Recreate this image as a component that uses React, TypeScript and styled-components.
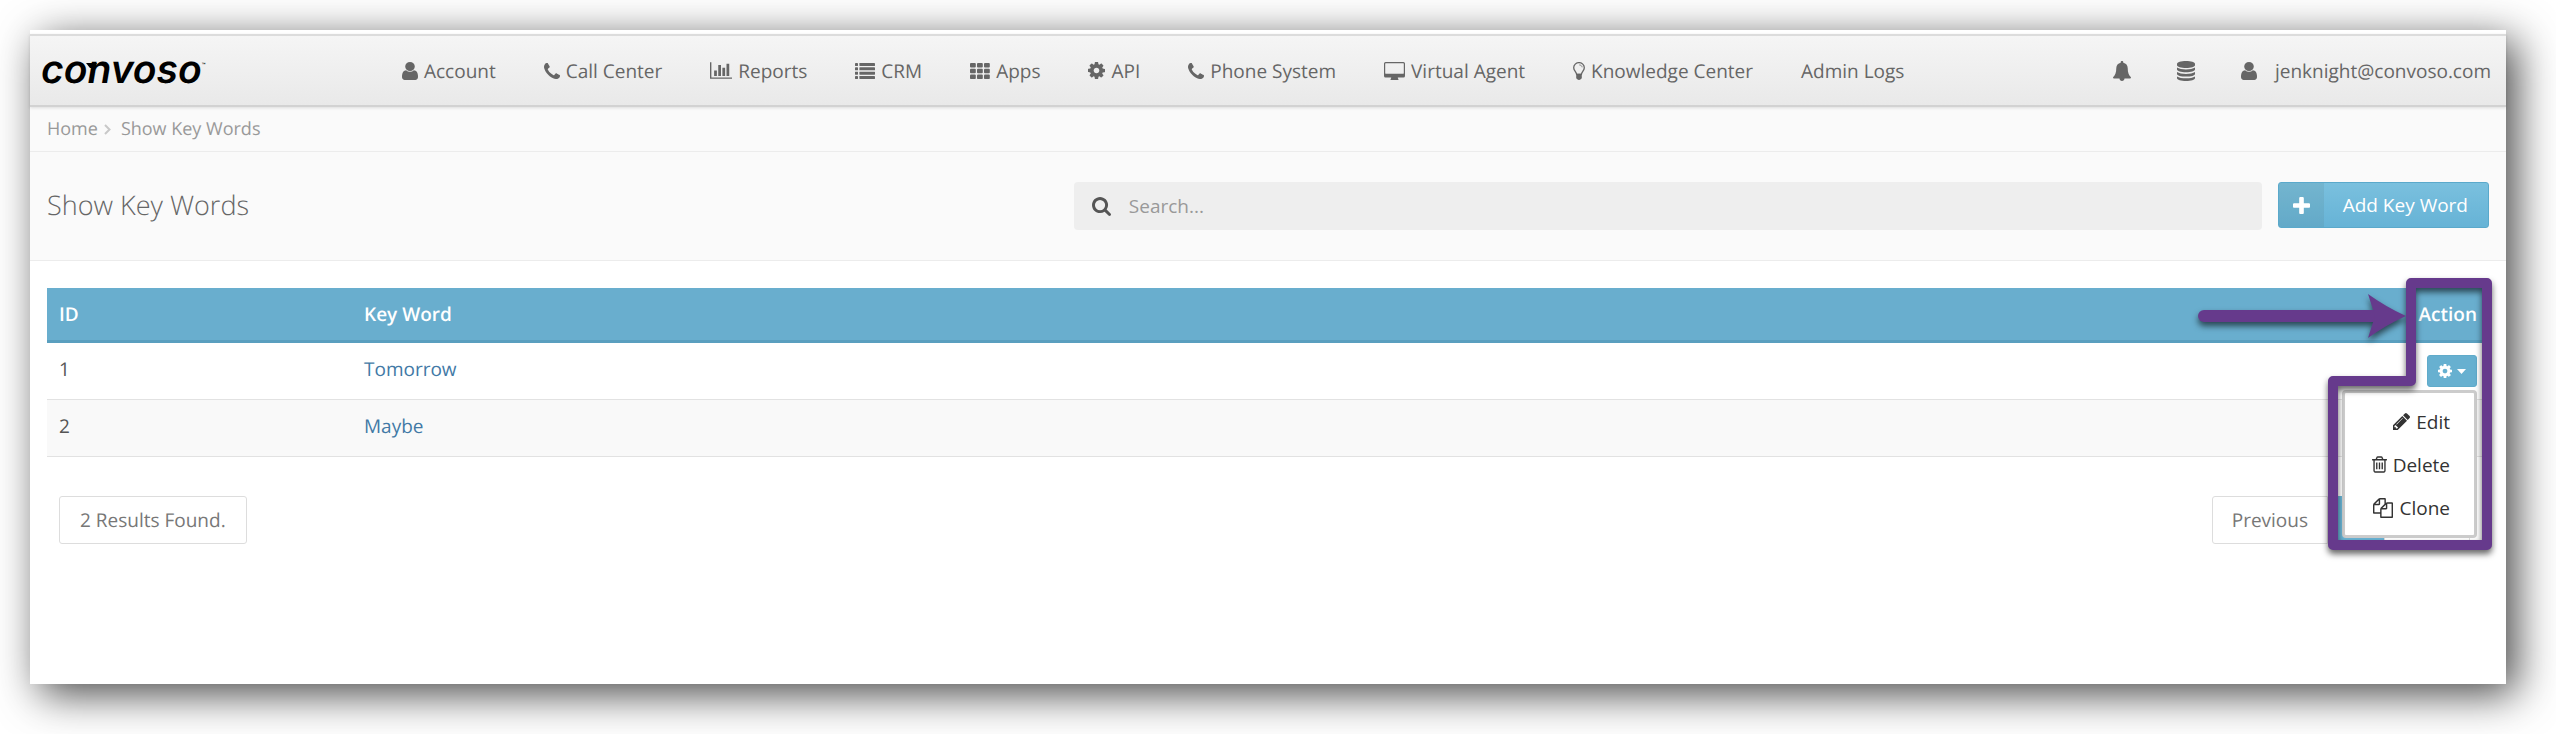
import React from 'react';
import styled, { createGlobalStyle } from 'styled-components';

const PURPLE = '#663a8c';

const GlobalStyle = createGlobalStyle`
  *, *::before, *::after { box-sizing: border-box; }
  body {
    margin: 0;
    background: #fff;
    color: #555;
    font-family: 'Open Sans', 'Noto Sans', sans-serif;
    font-size: 19px;
    line-height: 28px;
    text-rendering: geometricPrecision;
  }
  a { color: inherit; text-decoration: none; }
  button, input { font: inherit; }
`;

/* ---------- icons ---------- */

const Svg = styled.svg`
  display: block;
  flex: none;
  fill: currentColor;
`;

type IconProps = { w: number; h: number };

const UserIcon = ({ w, h }: IconProps) => (
  <Svg width={w} height={h} viewBox="256 128 1280 1536" preserveAspectRatio="none" aria-hidden="true">
    <path d="M1536 1399q0 109-62.5 187t-150.5 78h-854q-88 0-150.5-78t-62.5-187q0-85 8.5-160.5t31.5-152 58.5-131 94-89 134.5-34.5q131 128 313 128t313-128q76 0 134.5 34.5t94 89 58.5 131 31.5 152 8.5 160.5zm-256-887q0 159-112.5 271.5t-271.5 112.5-271.5-112.5-112.5-271.5 112.5-271.5 271.5-112.5 271.5 112.5 112.5 271.5z" />
  </Svg>
);

const PhoneIcon = ({ w, h }: IconProps) => (
  <Svg width={w} height={h} viewBox="192 128 1408 1408" aria-hidden="true">
    <path d="M1600 1240q0 27-10 70.5t-21 68.5q-21 50-122 106-94 51-186 51-27 0-53-3.5t-57.5-12.5-47-14.5-55.5-20.5-49-18q-98-35-175-83-127-79-264-216t-216-264q-48-77-83-175-3-9-18-49t-20.5-55.5-14.5-47-12.5-57.5-3.5-53q0-92 51-186 56-101 106-122 25-11 68.5-21t70.5-10q14 0 21 3 18 6 53 76 11 19 30 54t35 63.5 31 53.5q3 4 17.5 25t21.5 35.5 7 28.5q0 20-28.5 50t-62 55-62 53-28.5 46q0 9 5 22.5t8.5 20.5 14 24 11.5 19q76 137 174 235t235 174q2 1 19 11.5t24 14 20.5 8.5 22.5 5q18 0 46-28.5t53-62 55-62 50-28.5q14 0 28.5 7t35.5 21.5 25 17.5q25 15 53.5 31t63.5 35 54 30q70 35 76 53 3 7 3 21z" />
  </Svg>
);

const ChartIcon = ({ w, h }: IconProps) => (
  <Svg width={w} height={h} viewBox="0 128 2048 1536" aria-hidden="true">
    <path d="M640 896v512h-256v-512h256zm384-512v1024h-256v-1024h256zm1024 1152v128h-2048v-1536h128v1408h1920zm-640-896v768h-256v-768h256zm384-384v1152h-256v-1152h256z" />
  </Svg>
);

const ListIcon = ({ w, h }: IconProps) => (
  <Svg width={w} height={h} viewBox="0 0 20 16" aria-hidden="true">
    {[0, 4.33, 8.66, 13].map((y) => (
      <g key={y}>
        <rect x="0" y={y} width="3" height="3" rx="0.4" />
        <rect x="4.4" y={y} width="15.6" height="3" rx="0.4" />
      </g>
    ))}
  </Svg>
);

const GridIcon = ({ w, h }: IconProps) => (
  <Svg width={w} height={h} viewBox="0 0 20 16" aria-hidden="true">
    {[0, 5.8, 11.6].map((y) =>
      [0, 7, 14].map((x) => <rect key={`${x}-${y}`} x={x} y={y} width="5.8" height="4.5" rx="1" />),
    )}
  </Svg>
);

const CogIcon = ({ w, h }: IconProps) => (
  <Svg width={w} height={h} viewBox="128 128 1536 1536" aria-hidden="true">
    <path d="M1152 896q0-106-75-181t-181-75-181 75-75 181 75 181 181 75 181-75 75-181zm512-109v222q0 12-8 23t-20 13l-185 28q-19 54-39 91 35 50 107 138 10 12 10 25t-9 23q-27 37-99 108t-94 71q-12 0-26-9l-138-108q-44 23-91 38-16 136-29 186-7 28-36 28h-222q-14 0-24.5-8.5t-11.5-21.5l-28-184q-49-16-90-37l-141 107q-10 9-25 9-14 0-25-11-126-114-165-168-7-10-7-23 0-12 8-23 15-21 51-66.5t54-70.5q-27-50-41-99l-183-27q-13-2-21-12.5t-8-23.5v-222q0-12 8-23t19-13l186-28q14-46 39-92-40-57-107-138-10-12-10-24 0-10 9-23 26-36 98.5-107.5t94.5-71.5q13 0 26 10l138 107q44-23 91-38 16-136 29-186 7-28 36-28h222q14 0 24.5 8.5t11.5 21.5l28 184q49 16 90 37l142-107q9-9 24-9 13 0 25 10 129 119 165 170 7 8 7 22 0 12-8 23-15 21-51 66.5t-54 70.5q26 50 41 98l183 28q13 2 21 12.5t8 23.5z" />
  </Svg>
);

const DesktopIcon = ({ w, h }: IconProps) => (
  <Svg width={w} height={h} viewBox="0 0 21 18" aria-hidden="true">
    <path
      fillRule="evenodd"
      d="M1.6 0h17.8A1.6 1.6 0 0 1 21 1.6v12.3a1.6 1.6 0 0 1-1.6 1.6h-5.6c0 1 .7 1.4.7 1.9 0 .4-.3.6-.7.6H7.2c-.4 0-.7-.2-.7-.6 0-.5.7-.9.7-1.9H1.6A1.6 1.6 0 0 1 0 13.9V1.6A1.6 1.6 0 0 1 1.6 0zM1.7 1.2c-.3 0-.5.2-.5.5v9.5c0 .3.2.5.5.5h17.6c.3 0 .5-.2.5-.5V1.7c0-.3-.2-.5-.5-.5z"
    />
  </Svg>
);

const BulbIcon = ({ w, h }: IconProps) => (
  <Svg width={w} height={h} viewBox="0 0 12 18" aria-hidden="true">
    <path
      d="M3.6 12.4c-.3-2.6-2.9-3.7-2.9-6.7a5.3 5.1 0 0 1 10.6 0c0 3-2.6 4.1-2.9 6.7z"
      fill="none"
      stroke="currentColor"
      strokeWidth="1.3"
    />
    <path d="M6.3 2.9c1.6.1 2.7 1 2.8 2.4" fill="none" stroke="currentColor" strokeWidth=".8" />
    <path d="M3.2 11.8h5.6v4.2c0 .7-1 .9-1.3 1.5-.3.6-2.7.6-3 0-.3-.6-1.3-.8-1.3-1.5z" />
  </Svg>
);

const BellIcon = ({ w, h }: IconProps) => (
  <Svg width={w} height={h} viewBox="0 0 18 20" aria-hidden="true">
    <path d="M9 0c.8 0 1.3.5 1.3 1.2v.5c2.7.5 4.4 2.6 4.4 5.3 0 4.8 1.2 7.4 3.3 9.2 0 .8-.6 1.3-1.3 1.3h-5.2c0 1.5-1.1 2.5-2.5 2.5s-2.5-1-2.5-2.5H1.3C.6 17.5 0 17 0 16.2c2.1-1.8 3.3-4.4 3.3-9.2 0-2.7 1.7-4.8 4.4-5.3v-.5C7.7.5 8.2 0 9 0z" />
  </Svg>
);

const DatabaseIcon = ({ w, h }: IconProps) => (
  <Svg width={w} height={h} viewBox="0 0 18 20" aria-hidden="true">
    <path d="M9 0c5 0 9 1.2 9 2.7v1.5C18 5.7 14 6.9 9 6.9S0 5.7 0 4.2V2.7C0 1.2 4 0 9 0z" />
    {[0, 4.4, 8.8].map((dy) => (
      <path
        key={dy}
        transform={`translate(0 ${dy})`}
        d="M0 6.6c1.9 1.3 5.3 1.9 9 1.9s7.1-.6 9-1.9v1.9c0 1.5-4 2.7-9 2.7S0 10 0 8.5z"
      />
    ))}
  </Svg>
);

const SearchIcon = ({ w, h }: IconProps) => (
  <Svg width={w} height={h} viewBox="64 128 1664 1664" aria-hidden="true">
    <path d="M1216 832q0-185-131.5-316.5t-316.5-131.5-316.5 131.5-131.5 316.5 131.5 316.5 316.5 131.5 316.5-131.5 131.5-316.5zm512 832q0 52-38 90t-90 38q-54 0-90-38l-343-342q-179 124-399 124-143 0-273.5-55.5t-225-150-150-225-55.5-273.5 55.5-273.5 150-225 225-150 273.5-55.5 273.5 55.5 225 150 150 225 55.5 273.5q0 220-124 399l343 343q37 37 37 90z" />
  </Svg>
);

const PlusIcon = ({ w, h }: IconProps) => (
  <Svg width={w} height={h} viewBox="192 128 1408 1408" aria-hidden="true">
    <path d="M1600 736v192q0 40-28 68t-68 28h-416v416q0 40-28 68t-68 28h-192q-40 0-68-28t-28-68v-416h-416q-40 0-68-28t-28-68v-192q0-40 28-68t68-28h416v-416q0-40 28-68t68-28h192q40 0 68 28t28 68v416h416q40 0 68 28t28 68z" />
  </Svg>
);

const PencilIcon = ({ w, h }: IconProps) => (
  <Svg width={w} height={h} viewBox="128 149 1515 1515" aria-hidden="true">
    <path d="M491 1536l91-91-235-235-91 91v107h128v128h107zm523-928q0-22-22-22-10 0-17 7l-542 542q-7 7-7 17 0 22 22 22 10 0 17-7l542-542q7-7 7-17zm-54-192l416 416-832 832h-416v-416zm683 96q0 53-37 90l-166 166-416-416 166-165q36-38 90-38 53 0 91 38l235 234q37 39 37 91z" />
  </Svg>
);

const TrashIcon = ({ w, h }: IconProps) => (
  <Svg width={w} height={h} viewBox="192 128 1408 1536" aria-hidden="true">
    <path d="M704 736v576q0 14-9 23t-23 9h-64q-14 0-23-9t-9-23v-576q0-14 9-23t23-9h64q14 0 23 9t9 23zm256 0v576q0 14-9 23t-23 9h-64q-14 0-23-9t-9-23v-576q0-14 9-23t23-9h64q14 0 23 9t9 23zm256 0v576q0 14-9 23t-23 9h-64q-14 0-23-9t-9-23v-576q0-14 9-23t23-9h64q14 0 23 9t9 23zm128 724v-948h-896v948q0 22 7 40.5t14.5 27 10.5 8.5h832q3 0 10.5-8.5t14.5-27 7-40.5zm-672-1076h448l-48-117q-7-9-17-11h-317q-10 2-17 11zm928 32v64q0 14-9 23t-23 9h-96v948q0 83-47 143.5t-113 60.5h-832q-66 0-113-58.5t-47-141.5v-952h-96q-14 0-23-9t-9-23v-64q0-14 9-23t23-9h309l70-167q15-37 54-63t79-26h320q40 0 79 26t54 63l70 167h309q14 0 23 9t9 23z" />
  </Svg>
);

const CopyIcon = ({ w, h }: IconProps) => (
  <Svg width={w} height={h} viewBox="0 0 1792 1792" aria-hidden="true">
    <path d="M1696 384q40 0 68 28t28 68v1216q0 40-28 68t-68 28h-960q-40 0-68-28t-28-68v-288h-544q-40 0-68-28t-28-68v-672q0-40 20-88t48-76l408-408q28-28 76-48t88-20h416q40 0 68 28t28 68v328q68-40 128-40h416zm-544 213l-299 299h299v-299zm-640-384l-299 299h299v-299zm196 647l316-316v-416h-384v416q0 40-28 68t-68 28h-416v640h512v-256q0-40 20-88t48-76zm956 804v-1152h-384v416q0 40-28 68t-68 28h-416v640h896z" />
  </Svg>
);

const ChevronIcon = () => (
  <Svg width={7} height={11} viewBox="0 0 7 11" aria-hidden="true">
    <path d="M1 1l4.5 4.5L1 10" fill="none" stroke="currentColor" strokeWidth="2" />
  </Svg>
);

const CaretIcon = () => (
  <Svg width={9} height={5} viewBox="0 0 9 5" aria-hidden="true">
    <path d="M0 0h9L4.5 5z" />
  </Svg>
);

/* ---------- frame and top bar ---------- */

const Window = styled.div`
  position: relative;
  margin: 30px 50px 50px 30px;
  min-height: calc(100vh - 80px);
  padding-top: 4px;
  background: #fff;
  box-shadow: 10px 10px 40px rgba(0, 0, 0, 0.72);
`;

const TopBar = styled.header`
  position: relative;
  display: flex;
  align-items: center;
  height: 73px;
  padding: 0 15px 0 11px;
  border-top: 2px solid #dcdcdc;
  border-bottom: 2px solid #d2d2d2;
  background: linear-gradient(#f5f5f5, #e9e9e9);
  box-shadow: 0 1px 3px rgba(0, 0, 0, 0.12);
  color: #666;
  white-space: nowrap;
`;

const Logo = styled.a`
  position: relative;
  display: flex;
  align-items: flex-start;
  flex: none;
  width: 337px;
  padding-bottom: 2px;
  color: #000;
  font-family: Inter, 'Open Sans', sans-serif;
  font-size: 39px;
  font-style: italic;
  font-weight: 600;
  line-height: 48px;
`;

const LogoMark = styled.svg`
  position: absolute;
  left: 45px;
  top: 17px;
`;

const Trademark = styled.sup`
  margin-top: 17px;
  font-size: 6px;
  font-style: normal;
  line-height: 6px;
`;

const Nav = styled.nav`
  display: flex;
`;

const NavLink = styled.a`
  display: flex;
  align-items: center;
  gap: 6px;
  padding: 0 24px;
`;

const UserTools = styled.div`
  display: flex;
  align-items: center;
  gap: 46px;
  margin-left: auto;
`;

const IconButton = styled.button`
  display: flex;
  padding: 0;
  border: 0;
  background: none;
  color: inherit;
`;

const UserLink = styled.a`
  display: flex;
  align-items: center;
  gap: 18px;
`;

/* ---------- page header ---------- */

const Breadcrumb = styled.nav`
  display: flex;
  align-items: center;
  height: 45px;
  padding: 0 17px;
  border-bottom: 1px solid #ececec;
  background: #fafafa;
  color: #999;
  font-size: 18px;

  svg {
    margin: 0 10px 0 6px;
    color: #c8c8c8;
  }
`;

const PageHeader = styled.div`
  display: flex;
  align-items: flex-start;
  height: 109px;
  padding: 30px 17px 0;
  border-bottom: 1px solid #ececec;
  background: #fafafa;
`;

const Title = styled.h1`
  flex: 1027;
  margin: 0;
  color: #666;
  font-size: 27px;
  font-weight: 300;
  line-height: 46px;
`;

const SearchField = styled.label`
  display: flex;
  align-items: center;
  flex: 1152;
  gap: 18px;
  height: 48px;
  margin-right: 16px;
  padding: 0 18px;
  border-radius: 4px;
  background: #eee;
  color: #555;
`;

const SearchInput = styled.input`
  flex: 1;
  min-width: 0;
  padding: 0;
  border: 0;
  outline: 0;
  background: none;
  color: #555;

  &::placeholder {
    color: #999;
    opacity: 1;
  }
`;

const AddButton = styled.button`
  display: flex;
  align-items: stretch;
  flex: none;
  height: 46px;
  padding: 0;
  overflow: hidden;
  border: 1px solid #5aa9cb;
  border-radius: 3px;
  background: linear-gradient(#7ac0de, #66b3d6);
  color: #fff;
`;

const AddIcon = styled.span`
  display: flex;
  align-items: center;
  justify-content: center;
  width: 45px;
  background: rgba(80, 110, 110, 0.13);
`;

const AddText = styled.span`
  padding: 0 20px 0 19px;
  line-height: 44px;
`;

/* ---------- table ---------- */

const Content = styled.main`
  padding: 27px 17px 0;
`;

const Table = styled.table`
  width: 100%;
  border-collapse: separate;
  border-spacing: 0;
  text-align: left;
`;

const HeadCell = styled.th<{ $width?: string; $end?: boolean }>`
  width: ${(p) => p.$width ?? 'auto'};
  padding: 12px;
  border-bottom: 3px solid #5a9fbf;
  background: #69aece;
  color: #fff;
  font-weight: 600;
  text-align: ${(p) => (p.$end ? 'right' : 'left')};
`;

const Row = styled.tr`
  &:nth-child(even) {
    background: #f9f9f9;
  }
`;

const Cell = styled.td`
  padding: 12px;
  border-bottom: 1px solid #e2e2e2;
  vertical-align: top;
`;

const WordLink = styled.a`
  color: #4279a6;
`;

const ActionBox = styled.div`
  position: relative;
  display: flex;
  justify-content: flex-end;
`;

const GearButton = styled.button`
  display: flex;
  align-items: center;
  justify-content: center;
  gap: 5px;
  width: 50px;
  height: 32px;
  padding: 0;
  border: 1px solid #60abca;
  border-radius: 3px;
  background: #67b0d0;
  color: #fff;
`;

const Menu = styled.ul`
  position: absolute;
  z-index: 2;
  top: 35px;
  right: 0;
  width: 135px;
  margin: 0;
  padding: 7px 0 6px;
  border: 3px solid #ccc;
  border-radius: 4px;
  background: #fff;
  color: #333;
  list-style: none;
`;

const MenuItem = styled.button`
  display: flex;
  align-items: center;
  justify-content: flex-end;
  gap: 6px;
  width: 100%;
  height: 43px;
  padding: 0 24px;
  border: 0;
  background: none;
  color: inherit;
`;

const TableFooter = styled.div`
  display: flex;
  justify-content: space-between;
  padding: 39px 19px 0 12px;
  color: #777;
`;

const ResultCount = styled.span`
  padding: 9px 20px;
  border: 1px solid #ddd;
  border-radius: 3px;
`;

const Pager = styled.nav`
  display: flex;
`;

const PageLink = styled.a<{ $current?: boolean }>`
  min-width: 56px;
  min-height: 48px;
  padding: 9px 19px;
  border: 1px solid ${(p) => (p.$current ? '#69b4d5' : '#ddd')};
  background: ${(p) => (p.$current ? '#69b4d5' : '#fff')};
  color: ${(p) => (p.$current ? '#fff' : '#777')};

  &:first-child { border-radius: 3px 0 0 3px; }
  &:last-child { min-width: 86px; border-radius: 0 3px 3px 0; }
`;

/* ---------- callout ---------- */

const Callout = styled.svg`
  position: absolute;
  z-index: 3;
  top: 238px;
  right: 4px;
  overflow: visible;
  pointer-events: none;
  filter: drop-shadow(0 4px 3px rgba(0, 0, 0, 0.6));
`;

const navItems = [
  { label: 'Account', icon: <UserIcon w={16} h={18} /> },
  { label: 'Call Center', icon: <PhoneIcon w={16} h={16} /> },
  { label: 'Reports', icon: <ChartIcon w={22} h={17} /> },
  { label: 'CRM', icon: <ListIcon w={20} h={16} /> },
  { label: 'Apps', icon: <GridIcon w={20} h={16} /> },
  { label: 'API', icon: <CogIcon w={17} h={17} /> },
  { label: 'Phone System', icon: <PhoneIcon w={16} h={16} /> },
  { label: 'Virtual Agent', icon: <DesktopIcon w={21} h={18} /> },
  { label: 'Knowledge Center', icon: <BulbIcon w={12} h={18} /> },
  { label: 'Admin Logs', icon: null },
];

const rows = [
  { id: 1, word: 'Tomorrow', open: true },
  { id: 2, word: 'Maybe', open: false },
];

const menuItems = [
  { label: 'Edit', icon: <PencilIcon w={17} h={17} /> },
  { label: 'Delete', icon: <TrashIcon w={15} h={17} /> },
  { label: 'Clone', icon: <CopyIcon w={20} h={20} /> },
];

export default function App() {
  return (
    <>
      <GlobalStyle />
      <Window>
        <TopBar>
          <Logo href="#">
            convoso
            <Trademark>™</Trademark>
            <LogoMark width="12" height="7" viewBox="0 0 12 7" aria-hidden="true">
              <path d="M0 0h11L9 5H4z" />
            </LogoMark>
          </Logo>
          <Nav aria-label="Main">
            {navItems.map((item) => (
              <NavLink key={item.label} href="#">
                {item.icon}
                {item.label}
              </NavLink>
            ))}
          </Nav>
          <UserTools>
            <IconButton type="button" aria-label="Notifications">
              <BellIcon w={18} h={20} />
            </IconButton>
            <IconButton type="button" aria-label="Data">
              <DatabaseIcon w={18} h={20} />
            </IconButton>
            <UserLink href="#">
              <UserIcon w={16} h={18} />
              jenknight@convoso.com
            </UserLink>
          </UserTools>
        </TopBar>

        <Breadcrumb aria-label="Breadcrumb">
          <a href="#">Home</a>
          <ChevronIcon />
          <a href="#">Show Key Words</a>
        </Breadcrumb>

        <PageHeader>
          <Title>Show Key Words</Title>
          <SearchField>
            <SearchIcon w={19} h={19} />
            <SearchInput type="text" placeholder="Search..." aria-label="Search" />
          </SearchField>
          <AddButton type="button">
            <AddIcon>
              <PlusIcon w={17} h={17} />
            </AddIcon>
            <AddText>Add Key Word</AddText>
          </AddButton>
        </PageHeader>

        <Content>
          <Table>
            <thead>
              <tr>
                <HeadCell $width="305px">ID</HeadCell>
                <HeadCell>Key Word</HeadCell>
                <HeadCell $width="160px" $end>
                  Action
                </HeadCell>
              </tr>
            </thead>
            <tbody>
              {rows.map((row) => (
                <Row key={row.id}>
                  <Cell>{row.id}</Cell>
                  <Cell>
                    <WordLink href="#">{row.word}</WordLink>
                  </Cell>
                  <Cell>
                    <ActionBox>
                      <GearButton type="button" aria-label={`Actions for ${row.word}`}>
                        <CogIcon w={14} h={14} />
                        <CaretIcon />
                      </GearButton>
                      {row.open && (
                        <Menu>
                          {menuItems.map((item) => (
                            <li key={item.label}>
                              <MenuItem type="button">
                                {item.icon}
                                {item.label}
                              </MenuItem>
                            </li>
                          ))}
                        </Menu>
                      )}
                    </ActionBox>
                  </Cell>
                </Row>
              ))}
            </tbody>
          </Table>

          <TableFooter>
            <ResultCount>2 Results Found.</ResultCount>
            <Pager aria-label="Pages">
              <PageLink href="#">Previous</PageLink>
              <PageLink href="#" $current aria-label="Page 1" />
              <PageLink href="#" aria-label="Next" />
            </Pager>
          </TableFooter>
        </Content>

        <Callout width="314" height="292" viewBox="2188 268 314 292" aria-hidden="true">
          <path
            d="M2411 283H2487V545H2333V381H2411Z"
            fill="none"
            stroke={PURPLE}
            strokeWidth="10"
            strokeLinejoin="round"
          />
          <path d="M2204 316H2380" stroke={PURPLE} strokeWidth="12" strokeLinecap="round" />
          <path d="M2368 294Q2386 307 2406 316Q2386 325 2368 338L2375 316Z" fill={PURPLE} />
        </Callout>
      </Window>
    </>
  );
}
